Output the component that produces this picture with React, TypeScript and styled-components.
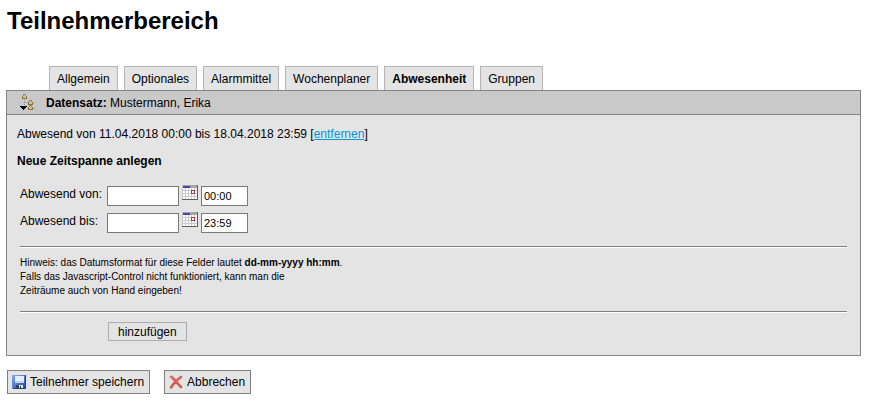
import React from "react";
import styled, { createGlobalStyle } from "styled-components";

const GlobalStyle = createGlobalStyle`
  *, *::before, *::after { box-sizing: border-box; }
  body {
    margin: 0;
    background: #fff;
    color: #000;
    font: 12px/16px "Liberation Sans", Arial, sans-serif;
  }
  button, input { font: inherit; color: inherit; }
`;

const Page = styled.main`
  padding: 7px 34px 16px 6px;
`;

const Title = styled.h1`
  margin: 0 0 31px 1px;
  font-size: 24px;
  line-height: 28px;
`;

const Tabs = styled.nav`
  display: flex;
  gap: 6px;
  padding-left: 43px;
`;

const Tab = styled.a<{ $active?: boolean }>`
  height: 24px;
  padding: 4px 7px;
  border: 1px solid #b4b4b4;
  border-bottom: 0;
  background: #e4e4e4;
  color: #000;
  text-decoration: none;
  font-weight: ${(p) => (p.$active ? "bold" : "normal")};
`;

const Panel = styled.section`
  border: 1px solid #848484;
  background: #e4e4e4;
`;

const PanelHeader = styled.header`
  display: flex;
  align-items: center;
  gap: 9px;
  height: 24px;
  padding-left: 13px;
  border-bottom: 1px solid #848484;
  background: #c9c9c9;
`;

const PanelBody = styled.div`
  padding: 11px 10px 14px;
`;

const Absence = styled.p`
  margin: 0;
`;

const RemoveLink = styled.a`
  color: #0099dd;
  text-decoration: underline;
`;

const SubTitle = styled.h2`
  margin: 11px 0 16px;
  font-size: 12px;
  line-height: 16px;
`;

const Fields = styled.div`
  display: grid;
  gap: 6px;
  padding: 0 3px;
`;

const FieldRow = styled.div`
  display: grid;
  grid-template-columns: 84px 72px 16px 47px;
  column-gap: 3px;
  height: 21px;
`;

const Label = styled.label`
  padding-top: 1px;
`;

const TextBox = styled.input`
  width: 100%;
  height: 20px;
  margin-top: 1px;
  padding: 0 2px;
  border: 1px solid #7a7a7a;
  border-radius: 0;
  background: #fff;
  font-size: 11px;
`;

const IconButton = styled.button`
  display: block;
  width: 16px;
  height: 15px;
  padding: 0;
  border: 0;
  background: none;

  svg { display: block; }
`;

const Rule = styled.hr`
  height: 2px;
  margin: 13px 3px 8px;
  border: 0;
  border-top: 1px solid #808080;
  border-bottom: 1px solid #fff;
`;

const Hint = styled.p`
  margin: 0 3px 13px;
  font-size: 10px;
  line-height: 14px;
`;

const AddButton = styled.button`
  display: block;
  height: 19px;
  margin: 9px 0 0 91px;
  padding: 0 9px;
  border: 1px solid #adadad;
  background: #e4e4e4;
  line-height: 16px;
`;

const Actions = styled.div`
  display: flex;
  gap: 14px;
  margin: 14px 0 0 1px;
`;

const ActionButton = styled.button`
  display: flex;
  align-items: center;
  gap: 4px;
  height: 24px;
  padding: 0 5px 0 4px;
  border: 1px solid #808080;
  background: #e4e4e4;
`;

const Lock = ({ x, y }: { x: number; y: number }) => (
  <g transform={`translate(${x} ${y})`}>
    <path d="M1.5 2V.5h2V2" fill="none" stroke="#8b8b8b" />
    <path d="M0 2h5v3H0z" fill="#8c7435" />
    <path d="M1 2h3v2H1z" fill="#e0c46e" />
  </g>
);

const TreeIcon = () => (
  <svg width="17" height="17" shapeRendering="crispEdges" aria-hidden="true">
    <Lock x={2} y={0} />
    <Lock x={8} y={6} />
    <Lock x={8} y={11} />
    <path d="M4.5 6v6M5 8.5h3M14 8.5h2M14 14.5h2" stroke="#8c96ad" strokeDasharray="1 1" />
    <path d="M0 12h7v1H6v1H5v1H4v1H3v-1H2v-1H1v-1H0z" fill="#000" />
  </svg>
);

const CalendarIcon = () => (
  <svg width="16" height="15" shapeRendering="crispEdges" aria-hidden="true">
    <path d="M0 0h16v15H0z" fill="#fff" />
    <path d="M0 0h16v3H0z" fill="#a5a5a5" />
    <path d="M1 1h7v2H1z" fill="#4545aa" />
    <path d="M0 5.5h15M0 8.5h15M0 11.5h15M3.5 3v11M6.5 3v11M9.5 3v11M12.5 3v11" stroke="#cbcbcb" />
    <path d="M.5 0v14" stroke="#c4c4c4" />
    <path d="M15.5 0v15M0 14.5h16" stroke="#606060" />
    <path d="M9.5 5.5h3v3h-3z" fill="#fff" stroke="#a63e45" />
  </svg>
);

const SaveIcon = () => (
  <svg width="14" height="14" aria-hidden="true">
    <defs>
      <linearGradient id="disk" x1="0" y1="0" x2="1" y2="1">
        <stop offset="0" stopColor="#83adf0" />
        <stop offset="1" stopColor="#203f9c" />
      </linearGradient>
    </defs>
    <path d="M0 0h14v14H1l-1-1z" fill="url(#disk)" />
    <path d="M13.5 0v14M1 13.5h13" stroke="#253f82" />
    <path d="M3 1h9v7H3z" fill="#e7eefb" />
    <path d="M3 6h9v2H3z" fill="#bdd2f5" />
    <path d="M4 10h7v4H4z" fill="#34435f" />
    <path d="M7 10h4v3H7z" fill="#dfe5e8" />
    <path d="M8 11h1v2H8z" fill="#26354e" />
  </svg>
);

const CancelIcon = () => (
  <svg width="14" height="14" aria-hidden="true">
    <path d="M2.2 1.8C5 4 9 9 12 12M12 2C8 5 4 9 2 12.5" fill="none" stroke="#cf5a50" strokeWidth="2.6" strokeLinecap="round" />
    <path d="M2 1.5l4.5 5M11.5 2.5L7 6.5" stroke="#e57868" />
  </svg>
);

const tabs = ["Allgemein", "Optionales", "Alarmmittel", "Wochenplaner", "Abwesenheit", "Gruppen"];

const spans = [
  { id: "from", label: "Abwesend von:", time: "00:00" },
  { id: "until", label: "Abwesend bis:", time: "23:59" },
];

export default function App() {
  return (
    <>
      <GlobalStyle />
      <Page>
        <Title>Teilnehmerbereich</Title>
        <Tabs>
          {tabs.map((name) => (
            <Tab
              key={name}
              href="#"
              $active={name === "Abwesenheit"}
              aria-current={name === "Abwesenheit" ? "page" : undefined}
            >
              {name}
            </Tab>
          ))}
        </Tabs>
        <Panel>
          <PanelHeader>
            <TreeIcon />
            <span>
              <b>Datensatz:</b> Mustermann, Erika
            </span>
          </PanelHeader>
          <PanelBody>
            <Absence>
              Abwesend von 11.04.2018 00:00 bis 18.04.2018 23:59 [<RemoveLink href="#">entfernen</RemoveLink>]
            </Absence>
            <SubTitle>Neue Zeitspanne anlegen</SubTitle>
            <Fields>
              {spans.map((span) => (
                <FieldRow key={span.id}>
                  <Label htmlFor={span.id}>{span.label}</Label>
                  <TextBox id={span.id} type="text" />
                  <IconButton type="button" aria-label="Kalender">
                    <CalendarIcon />
                  </IconButton>
                  <TextBox type="text" defaultValue={span.time} aria-label={`${span.label} Uhrzeit`} />
                </FieldRow>
              ))}
            </Fields>
            <Rule />
            <Hint>
              Hinweis: das Datumsformat für diese Felder lautet <b>dd-mm-yyyy hh:mm</b>.
              <br />
              Falls das Javascript-Control nicht funktioniert, kann man die
              <br />
              Zeiträume auch von Hand eingeben!
            </Hint>
            <Rule />
            <AddButton type="button">hinzufügen</AddButton>
          </PanelBody>
        </Panel>
        <Actions>
          <ActionButton type="button">
            <SaveIcon />
            Teilnehmer speichern
          </ActionButton>
          <ActionButton type="button">
            <CancelIcon />
            Abbrechen
          </ActionButton>
        </Actions>
      </Page>
    </>
  );
}
